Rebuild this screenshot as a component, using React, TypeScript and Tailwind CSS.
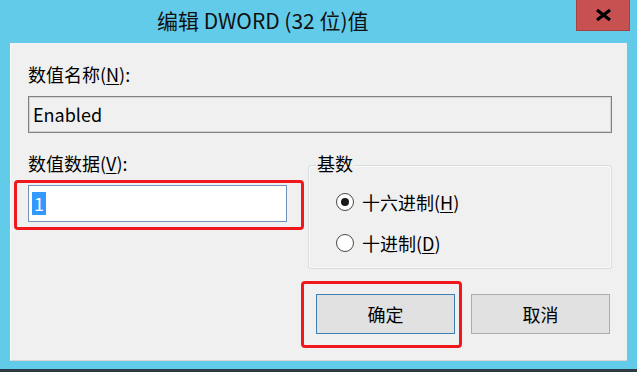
import React from 'react';

const font = { fontFamily: '"Noto Sans CJK SC", "Noto Sans", sans-serif' };

function Radio({ checked, children }: { checked?: boolean; children: React.ReactNode }) {
  return (
    <div className="flex items-center h-[24px]">
      <span className="ml-[27px] w-[18px] h-[18px] rounded-full border border-[#4a4a4a] bg-white flex items-center justify-center">
        {checked && <span className="w-[8px] h-[8px] rounded-full bg-[#1a1a1a]" />}
      </span>
      <span className="ml-[8px] text-[18px] leading-[24px] text-black">{children}</span>
    </div>
  );
}

export default function App() {
  return (
    <div className="w-[637px] h-[372px] bg-[#63cbea] flex flex-col overflow-hidden" style={font}>
      {/* Title bar */}
      <div className="relative h-[43px] shrink-0">
        <div className="pl-[157px] pt-[5px] text-[21px] leading-[30px] text-[#111]">
          编辑 DWORD (32 位)值
        </div>
        <div className="absolute left-[576px] top-0 w-[54px] h-[31px] bg-[#c75050] border border-[#a84141] border-t-0 flex items-center justify-center">
          <svg width="17" height="12" viewBox="0 0 17 12">
            <path d="M2 1 L15 11 M15 1 L2 11" stroke="#000" strokeWidth="3.2" strokeLinecap="butt" />
          </svg>
        </div>
      </div>

      {/* Client area */}
      <div className="ml-[10px] w-[617px] h-[318px] shrink-0 bg-[#f0f0f0] border-l border-b border-l-[#fafafa] border-b-[#d6d6d6] flex flex-col">
        <div className="ml-[17px] mt-[19px] h-[24px] text-[18px] leading-[24px] text-black">
          数值名称(<span className="underline underline-offset-2">N</span>):
        </div>
        <div className="ml-[17px] mt-[10px] w-[584px] h-[37px] border border-[#828282] shadow-[inset_0_0_0_1px_#d4d4d4] bg-[#f0f0f0] pl-[4px] text-[18px] leading-[35px] text-black">
          Enabled
        </div>

        <div className="flex mt-[18px]">
          {/* Value data */}
          <div className="flex flex-col">
            <div className="ml-[17px] h-[24px] text-[18px] leading-[24px] text-black">
              数值数据(<span className="underline underline-offset-2">V</span>):
            </div>
            <div className="ml-[3px] mt-[5px] w-[290px] h-[50px] border-[3px] border-[#f0181c] rounded-[4px] pl-[11px] pt-[2px]">
              <div className="w-[259px] h-[37px] bg-white border border-[#7193bb] flex items-center pl-[3px]">
                <span className="bg-[#3399ff] text-white text-[18px] leading-[23px] px-[2px]">1</span>
              </div>
            </div>
          </div>

          {/* Base group */}
          <div className="ml-[4px] mt-[14px] relative w-[304px] h-[104px] border border-[#d5dde3] rounded-[3px] shadow-[inset_0_0_0_1px_#fbfbfb]">
            <span className="absolute left-[7px] top-[-15px] bg-[#f0f0f0] px-[1px] text-[18px] leading-[24px] text-black">
              基数
            </span>
            <div className="mt-[24px]">
              <Radio checked>
                十六进制(<span className="underline underline-offset-2">H</span>)
              </Radio>
            </div>
            <div className="mt-[17px]">
              <Radio>
                十进制(<span className="underline underline-offset-2">D</span>)
              </Radio>
            </div>
          </div>
        </div>

        {/* Buttons */}
        <div className="flex mt-[12px] ml-[290px]">
          <div className="w-[161px] h-[67px] border-[3px] border-[#f0181c] rounded-[4px] pl-[12px] pt-[10px]">
            <button className="w-[139px] h-[40px] bg-[#e1e1e1] border border-[#3d7fb5] text-[18px] text-black" style={font}>
              确定
            </button>
          </div>
          <button className="ml-[9px] mt-[13px] w-[139px] h-[40px] bg-[#e1e1e1] border border-[#adadad] text-[18px] text-black" style={font}>
            取消
          </button>
        </div>
      </div>

      <div className="h-[8px] shrink-0" />
      <div className="flex-1 bg-[#2c3b43]" />
    </div>
  );
}
